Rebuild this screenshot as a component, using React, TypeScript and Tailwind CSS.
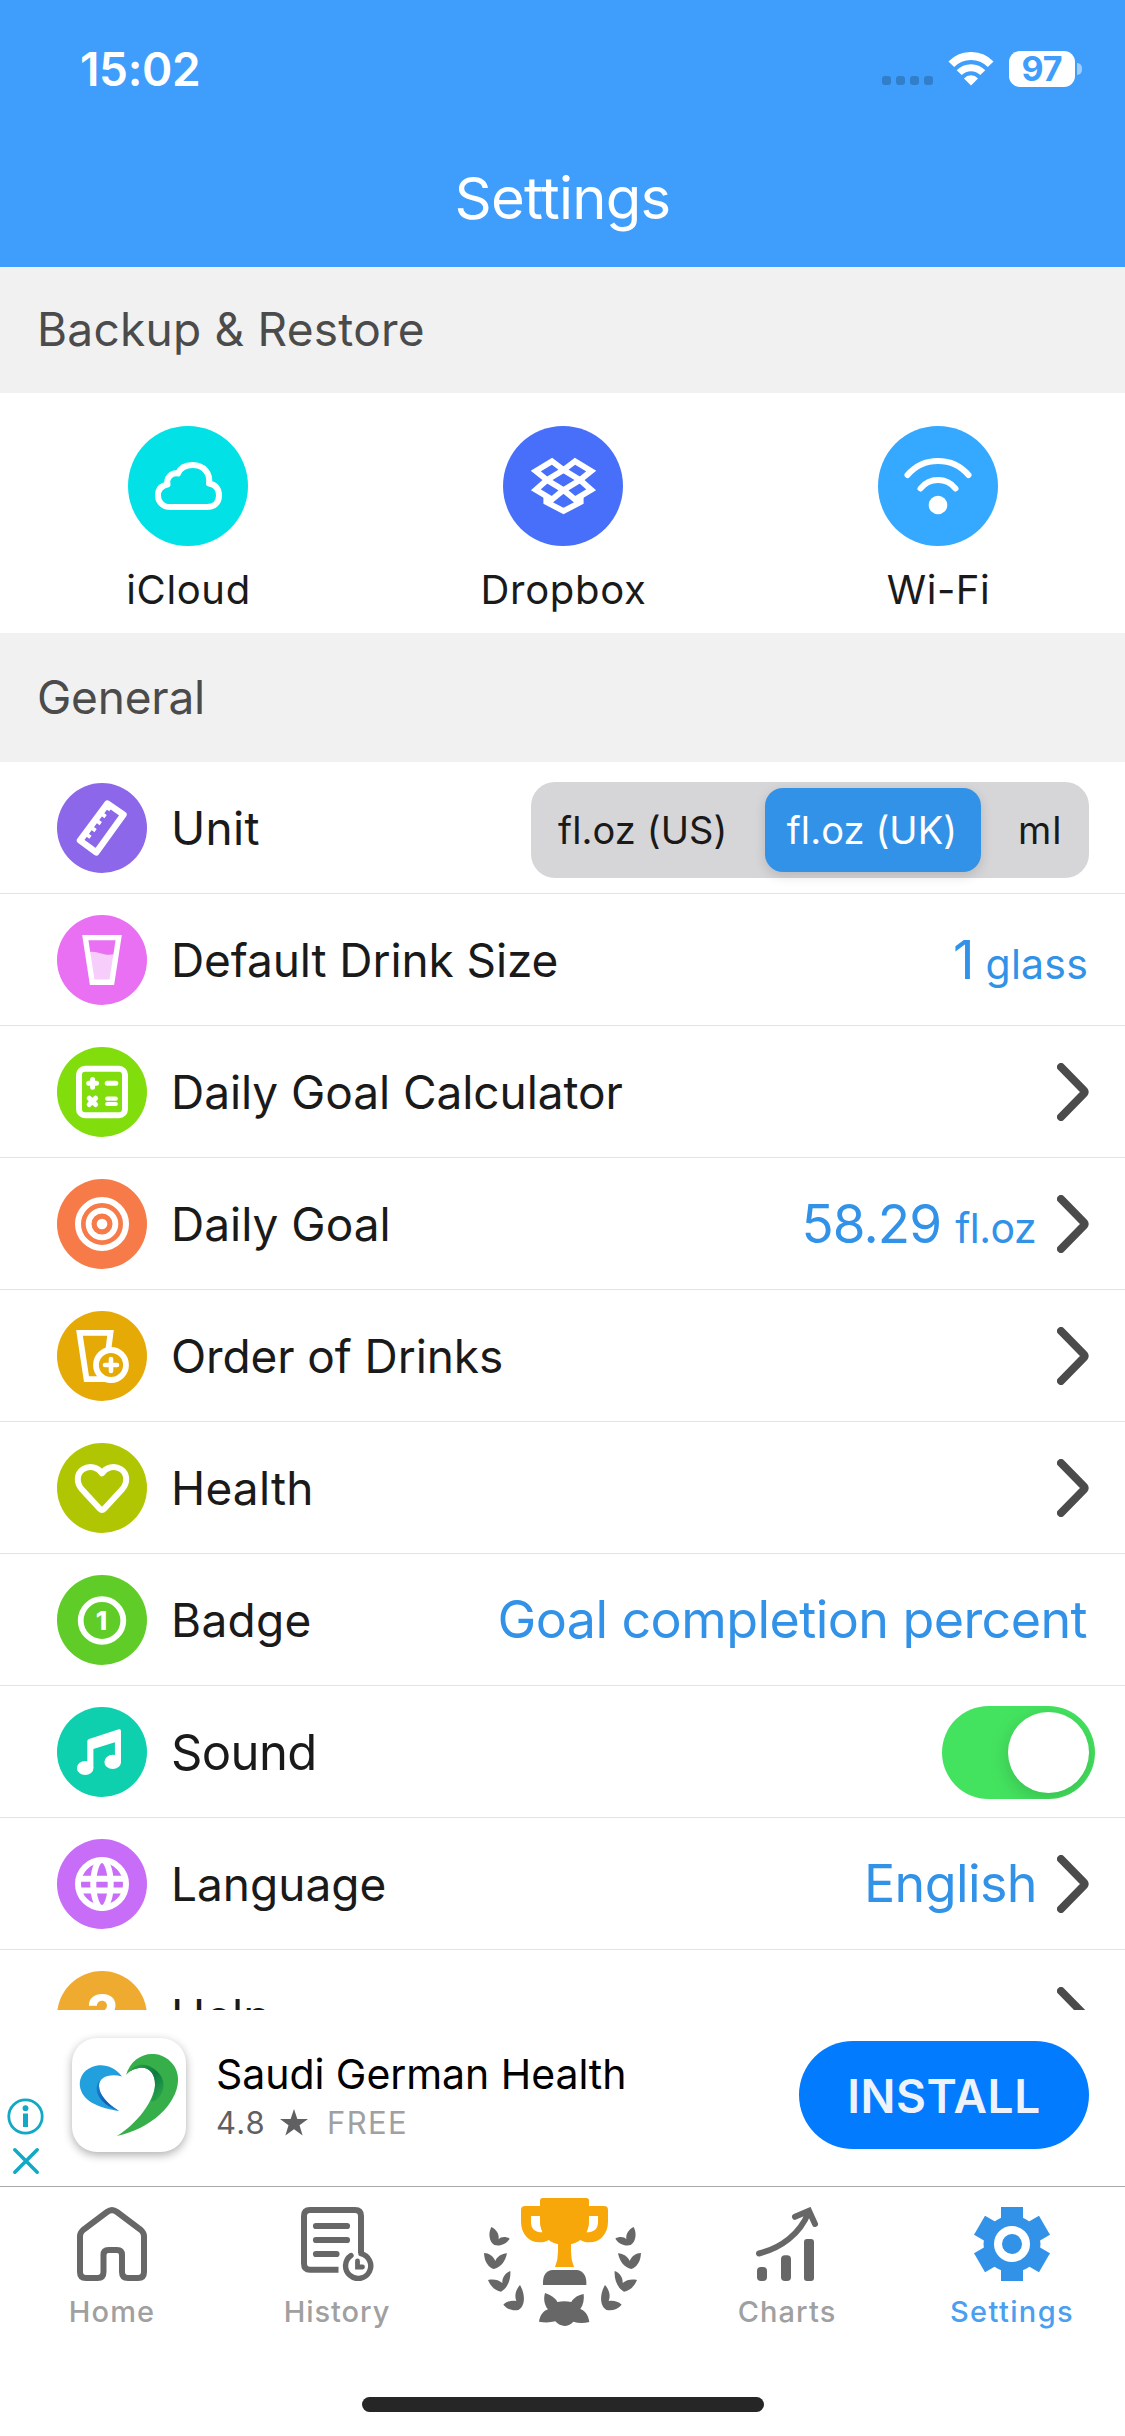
import type { ReactNode } from "react";

/* ---------- status bar ---------- */

function StatusWifi() {
  return (
    <svg className="ml-[15px] h-[34px] w-[46px]" viewBox="0 0 46 34" fill="none" stroke="#fff">
      <path d="M3.3 12.3A27.5 27.5 0 0 1 42.7 12.3" strokeWidth="8" />
      <path d="M11.2 20.6A16.5 16.5 0 0 1 34.8 20.6" strokeWidth="7" />
      <path d="M23 33.5L16 26.4A9.6 9.6 0 0 1 30 26.4Z" fill="#fff" stroke="none" />
    </svg>
  );
}

function StatusBar() {
  return (
    <div className="flex h-[138px] items-center pl-[80px] pr-[43px] text-white">
      <span className="text-[46px] font-semibold leading-none tracking-[-0.35px]">15:02</span>
      <div className="ml-auto flex items-center">
        <div className="mt-[23px] flex gap-[5px]">
          {[0, 1, 2, 3].map((i) => (
            <span key={i} className="h-[9px] w-[9px] rounded-[3px] bg-[#317fca]" />
          ))}
        </div>
        <StatusWifi />
        <div className="ml-[15px] flex h-[36px] w-[66px] items-center justify-center rounded-[11px] bg-white text-[34px] font-bold leading-none text-[#3f9dfb]">
          97
        </div>
        <span className="ml-[2px] h-[12px] w-[5px] rounded-r-full bg-[#9fcefd]" />
      </div>
    </div>
  );
}

/* ---------- backup services ---------- */

const cloudIcon = (
  <path
    d="M42 81C33.5 81 30 74.5 30 69.5C30 63 34 59.5 39.5 58.5C38 52 43 46.5 50 47.5C52.5 41.5 58 39 64.5 39C76 39 82.5 47.5 81 57.5C88 58.5 91 63.5 91 69.5C91 77 86 81 79 81Z"
    strokeWidth="6"
    strokeLinejoin="round"
  />
);

const dropboxIcon = (
  <g strokeWidth="5.8">
    <path d="M49 35.3L60.5 44L44 54L32.8 45Z" />
    <path d="M72 35.3L60.5 44L77 54L88.2 45Z" />
    <path d="M44 54L32.8 63.8L49 73.5L60.5 64Z" />
    <path d="M77 54L88.2 63.8L72 73.5L60.5 64Z" />
    <path d="M43.3 70V76L60.5 85L77.7 76V70" />
  </g>
);

const wifiIcon = (
  <g strokeWidth="6" strokeLinecap="round">
    <path d="M29.5 49A40.2 40.2 0 0 1 90.5 49" />
    <path d="M42.5 62.5A22.3 22.3 0 0 1 77.5 62.5" />
    <circle cx="60" cy="79" r="9.3" fill="#fff" stroke="none" />
  </g>
);

function Service({ label, bg, tracking, children }: { label: string; bg: string; tracking: string; children: ReactNode }) {
  return (
    <div className="flex flex-1 flex-col items-center pt-[33px]">
      <svg className={`h-[120px] w-[120px] rounded-full ${bg}`} viewBox="0 0 120 120" fill="none" stroke="#fff">
        {children}
      </svg>
      <span className={`mt-[20px] pl-[2px] text-[40px] leading-[48px] text-[#1a1a1a] ${tracking}`}>{label}</span>
    </div>
  );
}

/* ---------- settings rows ---------- */

const rulerIcon = (
  <g>
    <path d="M50.5 20.5L66.5 31.7L39.3 69.3L23 57.5Z" strokeWidth="6.4" strokeLinejoin="round" />
    <path d="M27.5 50L33.5 54.3M32.8 43.4L38.6 47.6M38 36.4L43.8 40.6M42.8 29.4L48.6 33.6M47.6 22.6L53.4 26.8" strokeWidth="3.8" />
  </g>
);

const glassIcon = (
  <g>
    <path d="M33 37C41 35.5 47 42 57.5 39L54.5 67H35.5Z" fill="#fff" fillOpacity="0.65" stroke="none" />
    <path d="M28.3 22.6H61.7L54.8 67.2H35.2Z" strokeWidth="5.4" />
  </g>
);

const calculatorIcon = (
  <g strokeLinecap="round">
    <rect x="22" y="21.8" width="46" height="46.4" rx="6" strokeWidth="6" />
    <path d="M35.6 32.400V40.200M31.700 36.3H39.500M50.2 36.3H58.8M32.2 51.2L38.6 57.6M38.6 51.2L32.2 57.6" strokeWidth="5" />
    <path d="M50.2 51.7H58.8M50.2 57H58.8" strokeWidth="4.200" />
  </g>
);

const targetIcon = (
  <g>
    <circle cx="45" cy="45" r="24" strokeWidth="6" />
    <circle cx="45" cy="45" r="13.4" strokeWidth="5.8" />
    <circle cx="45" cy="45" r="5.3" fill="#fff" stroke="none" />
  </g>
);

const orderIcon = (
  <g strokeWidth="5.8">
    <path d="M51.3 39L53.5 21.9H22.5L29.5 68.1H50" />
    <circle cx="54" cy="54" r="15" />
    <path d="M54 48V60M48 54H60" strokeWidth="4.6" strokeLinecap="round" />
  </g>
);

const heartIcon = (
  <path
    d="M43 66L25 46.5C19 40 19.5 30.5 26 26.2C32.8 21.9 41 24.3 45 30.3C49 24.3 57.2 21.9 64 26.2C70.5 30.5 71 40 65 46.5L47 66Q45 68 43 66Z"
    strokeWidth="6"
    strokeLinejoin="round"
  />
);

const badgeIcon = (
  <g>
    <circle cx="45" cy="45.5" r="21.3" strokeWidth="5.8" />
    <text x="44.4" y="55.2" textAnchor="middle" fontSize="26" fontWeight="800" fill="#fff" stroke="none">
      1
    </text>
  </g>
);

const musicIcon = (
  <g fill="#fff" stroke="none">
    <path d="M30.3 34Q30.5 32.4 32 31.9L61.8 22.3Q64 21.8 64 24V56H57.9V35.2L36.4 42V61H30.3Z" />
    <ellipse cx="28.2" cy="61" rx="8.3" ry="7.1" />
    <ellipse cx="55.7" cy="54.9" rx="8.3" ry="7.1" />
  </g>
);

const globeIcon = (
  <g strokeWidth="6">
    <circle cx="45" cy="45" r="24" />
    <ellipse cx="45" cy="45" rx="8.7" ry="24" />
    <path d="M22 39.8H68M22 51.4H68" />
  </g>
);

const helpIcon = (
  <text x="45.5" y="65" textAnchor="middle" fontSize="56" fontWeight="700" fill="#fff" stroke="none">
    ?
  </text>
);

function Chevron() {
  return (
    <svg className="h-[58px] w-[32px]" viewBox="0 0 32 58" fill="none" stroke="#4b4b4b" strokeWidth="8" strokeLinecap="round" strokeLinejoin="round">
      <path d="M4 4L27 27.5Q28.2 29 27 30.5L4 54" />
    </svg>
  );
}

function UnitPicker() {
  return (
    <div className="mt-[4px] flex h-[96px] w-[558px] items-center rounded-[24px] bg-[#d6d6d8] text-[38px] leading-none tracking-[0.1px] text-[#1a1a1a]">
      <span className="w-[234px] pl-[27px]">fl.oz (US)</span>
      <span className="flex h-[84px] w-[216px] items-center justify-center rounded-[18px] bg-[#3192e8] pr-[2px] text-white shadow-[0_4px_12px_rgba(0,0,0,0.14)]">
        fl.oz (UK)
      </span>
      <span className="flex-1 pl-[37px] tracking-[1px]">ml</span>
    </div>
  );
}

function Toggle() {
  return (
    <div className="-mr-[6px] mt-[2px] flex h-[93px] w-[153px] items-center justify-end overflow-hidden rounded-full bg-[#44e35f] pr-[6px]">
      <span className="h-[81px] w-[81px] rounded-full bg-white shadow-[0_6px_20px_rgba(0,0,0,0.17)]" />
    </div>
  );
}

type RowProps = { label: string; bg: string; icon: ReactNode; value?: ReactNode; chevron?: boolean; labelClass?: string };

function Row({ label, bg, icon, value, chevron, labelClass = "text-[46px]" }: RowProps) {
  return (
    <div className="flex h-[132px] shrink-0 items-center border-b border-[#e4e4e6] pl-[57px] pr-[36px]">
      <svg className={`h-[90px] w-[90px] shrink-0 rounded-full ${bg}`} viewBox="0 0 90 90" fill="none" stroke="#fff">
        {icon}
      </svg>
      <span className={`ml-[24px] leading-none text-[#1a1a1a] ${labelClass}`}>{label}</span>
      <div className="ml-auto flex items-center text-[#3192e8]">
        {value}
        {chevron && (
          <span className="ml-[20px]">
            <Chevron />
          </span>
        )}
      </div>
    </div>
  );
}

const rows: RowProps[] = [
  { label: "Unit", bg: "bg-[#8c67ea]", icon: rulerIcon, value: <UnitPicker />, labelClass: "text-[46px] tracking-[0.3px]" },
  {
    label: "Default Drink Size",
    bg: "bg-[#e970f2]",
    icon: glassIcon,
    labelClass: "text-[46px] tracking-[-0.1px]",
    value: (
      <div className="mt-[2px] flex items-baseline leading-none">
        <span className="text-[53px]">1</span>
        <span className="ml-[11px] mr-px text-[41px] tracking-[0.2px]">glass</span>
      </div>
    ),
  },
  { label: "Daily Goal Calculator", bg: "bg-[#82dd0c]", icon: calculatorIcon, chevron: true, labelClass: "text-[46px] tracking-[-0.06px]" },
  {
    label: "Daily Goal",
    bg: "bg-[#f67b49]",
    icon: targetIcon,
    chevron: true,
    value: (
      <div className="mt-px flex items-baseline leading-none">
        <span className="text-[53px] tracking-[-0.9px]">58.29</span>
        <span className="ml-[14px] mr-px text-[41px] tracking-[-0.55px]">fl.oz</span>
      </div>
    ),
  },
  { label: "Order of Drinks", bg: "bg-[#e6aa06]", icon: orderIcon, chevron: true, labelClass: "text-[46px] tracking-[-0.1px]" },
  { label: "Health", bg: "bg-[#b0c603]", icon: heartIcon, chevron: true, labelClass: "text-[46px] tracking-[0.2px]" },
  {
    label: "Badge",
    bg: "bg-[#60cc28]",
    icon: badgeIcon,
    value: <span className="mr-[2px] text-[52px] leading-none tracking-[-0.58px]">Goal completion percent</span>,
    labelClass: "text-[46px] tracking-[0.3px]",
  },
  { label: "Sound", bg: "bg-[#0ecfae]", icon: musicIcon, value: <Toggle />, labelClass: "mt-[2px] text-[49px] tracking-[-0.6px]" },
  {
    label: "Language",
    bg: "bg-[#c76df8]",
    icon: globeIcon,
    chevron: true,
    value: <span className="text-[52px] leading-none tracking-[-0.6px]">English</span>,
  },
  { label: "Help", bg: "bg-[#efab30]", icon: helpIcon, chevron: true },
];

/* ---------- ad banner ---------- */

function AdLogo() {
  return (
    <svg className="ml-[28px] mt-[28px] h-[114px] w-[114px] rounded-[25px] bg-white shadow-[0_3px_10px_rgba(0,0,0,0.32)]" viewBox="0 0 114 114">
      <defs>
        <linearGradient id="blueShade" x1="0" y1="0" x2="1" y2="1">
          <stop offset="0" stopColor="#1b86d3" />
          <stop offset="0.6" stopColor="#1559b4" />
          <stop offset="1" stopColor="#1a86d8" />
        </linearGradient>
        <linearGradient id="greenShade" x1="0" y1="0" x2="1" y2="1">
          <stop offset="0" stopColor="#2fa548" />
          <stop offset="0.5" stopColor="#0c7a42" />
          <stop offset="1" stopColor="#2fae49" />
        </linearGradient>
      </defs>
      <path d="M50 38.5C42 28 30 25 20 29C10 33 6 42 8.5 51C12 64 28 70 47 73C36 66 27 57 27 48C27 39 38 35 50 38.5Z" fill="#22a0dd" />
      <path d="M28 42C20 50 26 66 47 73C36 66 27 57 27 48Q27 45 28 42Z" fill="url(#blueShade)" />
      <path d="M54 37C58 23 70 15 82 16C96 17 107 29 106 43C105 66 79 91 44.7 98C65 86 82 63 83 47C83.5 35 76 28 67 30C61 31 58 33 54 37Z" fill="#36ae49" />
      <path d="M57 34C62 27 70 25 77 28C90 34 96 46 88 58C84 63 81 64 79 63C82 57 83 51 83 47C83.5 35 76 28 67 30C62 31 60 32 57 34Z" fill="url(#greenShade)" />
    </svg>
  );
}

function AdBanner() {
  return (
    <div className="flex h-[176px] shrink-0 bg-white">
      <div className="ml-[7px] mt-[88px] flex w-[37px] flex-col items-center">
        <svg className="h-[37px] w-[37px]" viewBox="0 0 37 37" fill="none" stroke="#12a9c6">
          <circle cx="18.5" cy="18.5" r="16.7" strokeWidth="2.8" />
          <circle cx="18.5" cy="10.2" r="2.9" fill="#12a9c6" stroke="none" />
          <path d="M18.5 15.5V29" strokeWidth="5" />
        </svg>
        <svg className="mt-[12px] h-[28px] w-[28px]" viewBox="0 0 30 30" stroke="#12a9c6" strokeWidth="3.8" strokeLinecap="round">
          <path d="M3 3L27 27M27 3L3 27" />
        </svg>
      </div>
      <AdLogo />
      <div className="ml-[30px] mt-[38px]">
        <div className="text-[41px] leading-[52px] tracking-[-0.05px] text-black">Saudi German Health</div>
        <div className="flex h-[44px] items-center text-[31px] leading-none">
          <span className="tracking-[1.2px] text-[#606062]">4.8</span>
          <svg className="ml-[14px] h-[27px] w-[28px]" viewBox="0 0 26 25" fill="#606062">
            <path d="M13 0L16.1 9.2H26L18.1 15L21 24.5L13 18.8L5 24.5L7.9 15L0 9.2H9.9Z" />
          </svg>
          <span className="ml-[19px] tracking-[1.4px] text-[#a0a0a2]">FREE</span>
        </div>
      </div>
      <div className="ml-auto mr-[36px] mt-[31px] flex h-[108px] w-[290px] items-center justify-center rounded-full bg-[#027bff] pt-px text-[46px] font-semibold leading-none tracking-[0.6px] text-[#eef3fb]">
        INSTALL
      </div>
    </div>
  );
}

/* ---------- tab bar ---------- */

const homeIcon = (
  <svg className="h-[74px] w-[70px]" viewBox="0 0 70 74" fill="none" stroke="#676767" strokeWidth="6">
    <path d="M3 29C3 26 4 25 6 23L30 5Q35 1.2 40 5L64 23C66 25 67 26 67 29V65Q67 71 61 71H51Q45 71 45 65V48Q45 43 40 43H31.5Q26.5 43 26.5 48V65Q26.5 71 20.5 71H9Q3 71 3 65Z" />
  </svg>
);

const historyIcon = (
  <svg className="h-[74px] w-[73px]" viewBox="0 0 73 74" fill="none" stroke="#676767">
    <path d="M60 46V9Q60 3 54 3H9Q3 3 3 9V56.5Q3 62.8 9 62.8H37.5" strokeWidth="6" />
    <path d="M15 19H46M15 33H46M15 47H35.5" strokeWidth="6.2" strokeLinecap="round" />
    <path d="M50 48.5A12.6 12.6 0 1 0 60 46.6" strokeWidth="5.4" strokeLinecap="round" />
    <path d="M56.5 54V60H61.5" strokeWidth="4.8" strokeLinecap="round" />
  </svg>
);

const chartsIcon = (
  <svg className="h-[74px] w-[64px]" viewBox="0 0 64 74" fill="none" stroke="#676767" strokeWidth="6" strokeLinecap="round">
    <path d="M4 46.5C26 41 45 27 53.5 5.5" />
    <path d="M40 9.8L54 3.8L60 17" />
    <g fill="#676767" stroke="none">
      <rect x="2" y="60" width="10" height="14" rx="4" />
      <rect x="26" y="48.3" width="10" height="25.7" rx="4" />
      <rect x="49" y="32" width="10" height="42" rx="3" />
    </g>
  </svg>
);

const gearIcon = (
  <svg className="h-[74px] w-[76px]" viewBox="0 0 76 74" fill="#3192e8">
    <circle cx="38" cy="37" r="28.5" />
    <rect x="27" y="0" width="22" height="74" />
    <rect x="27" y="-0.5" width="22" height="75" transform="rotate(60 38 37)" />
    <rect x="27" y="-0.5" width="22" height="75" transform="rotate(120 38 37)" />
    <circle cx="38" cy="37" r="14" fill="none" stroke="#fff" strokeWidth="8" />
  </svg>
);

function LaurelSide() {
  return (
    <>
      <path d="M124 141C114 160 117 185 133 195C150 199 168 193 179 176C168 169 152 170 146 178C148 162 140 149 124 141Z" />
      <path d="M102 219C103 245 115 262 131 267C152 263 166 245 171 220C155 221 141 230 136 243C130 228 117 219 102 219Z" />
      <path d="M114 300C122 320 137 333 153 335C172 325 183 300 181 273C165 279 156 293 157 309C145 299 130 297 114 300Z" />
      <path d="M160 374C172 388 188 393 205 390C222 382 230 350 210 315C196 330 193 348 199 363C186 361 171 363 160 374Z" />
    </>
  );
}

function TrophyTab() {
  return (
    <div className="flex w-[225px] justify-center pr-[2px] pt-[9px]">
      <svg className="h-[132px] w-[160px]" viewBox="96 48 480 396" fill="#676767">
        <LaurelSide />
        <g transform="translate(675 0) scale(-1 1)">
          <LaurelSide />
        </g>
        <path d="M279 315V307C279 285 290 270 308 270H380C396 270 409 285 409 307V315Z" />
        <path d="M285 339C300 345 316 352 322 366C336 363 350 363 364 366C372 352 386 345 401 342C403 358 400 375 391 387C405 392 415 405 418 426C402 430 385 430 370 425C362 434 352 438 344 438C334 438 324 433 316 424C300 428 283 428 267 425C270 405 281 392 294 388C283 375 280 357 285 339Z" />
        <g fill="#f8a70a">
          <path d="M270 62Q270 54 278 54H409Q417 54 417 62V120C417 160 397 184 363 193V215Q363 240 372 261H315Q324 240 324 215V193C290 184 270 160 270 120Z" />
          <path fillRule="evenodd" d="M280 78H225Q213 78 213 90V125C213 162 238 187 268 187C280 187 290 184 298 179L310 150ZM272 108H243V126C243 146 254 157 278 157Q270 140 270 120Z" />
          <path fillRule="evenodd" d="M407 78H462Q474 78 474 90V125C474 162 449 187 419 187C407 187 397 184 389 179L377 150ZM415 108H444V126C444 146 433 157 409 157Q417 140 417 120Z" />
        </g>
      </svg>
    </div>
  );
}

function Tab({ label, icon, className }: { label: string; icon: ReactNode; className: string }) {
  return (
    <div className="flex w-[225px] flex-col items-center pr-px pt-[20px]">
      {icon}
      <span className={`mt-[15px] text-[29px] font-medium leading-[32px] ${className}`}>{label}</span>
    </div>
  );
}

/* ---------- screen ---------- */

export default function App() {
  return (
    <div className="flex h-[2436px] w-[1125px] flex-col overflow-hidden bg-white font-['Inter',sans-serif]">
      <header className="h-[267px] shrink-0 bg-[#3f9dfb]">
        <StatusBar />
        <h1 className="flex h-[120px] items-center justify-center text-[58px] leading-none tracking-[-0.78px] text-white">Settings</h1>
      </header>

      <main className="flex h-[1743px] shrink-0 flex-col overflow-hidden">
        <h2 className="flex h-[126px] shrink-0 items-center bg-[#f1f1f1] pb-[3px] pl-[37px] text-[46px] leading-none tracking-[0.25px] text-[#4b4b4b]">
          Backup &amp; Restore
        </h2>
        <div className="flex h-[240px] shrink-0">
          <Service label="iCloud" bg="bg-[#02e1e6]" tracking="tracking-[0.65px]">{cloudIcon}</Service>
          <Service label="Dropbox" bg="bg-[#476ffa]" tracking="tracking-[0.7px]">{dropboxIcon}</Service>
          <Service label="Wi-Fi" bg="bg-[#34a9ff]" tracking="tracking-[0.5px]">{wifiIcon}</Service>
        </div>
        <h2 className="flex h-[129px] shrink-0 items-center bg-[#f1f1f1] pb-[2px] pl-[37px] text-[46px] leading-none tracking-[-0.2px] text-[#4b4b4b]">
          General
        </h2>
        {rows.map((row) => (
          <Row key={row.label} {...row} />
        ))}
      </main>

      <AdBanner />

      <nav className="flex h-[210px] shrink-0 border-t border-[#a9aaa8]">
        <Tab label="Home" icon={homeIcon} className="tracking-[1.2px] text-[#a0a0a0]" />
        <Tab label="History" icon={historyIcon} className="tracking-[0.95px] text-[#a0a0a0]" />
        <TrophyTab />
        <Tab label="Charts" icon={chartsIcon} className="tracking-[1.1px] text-[#a0a0a0]" />
        <Tab label="Settings" icon={gearIcon} className="tracking-[1.37px] text-[#4a9ff0]" />
      </nav>
      <div className="mx-auto mt-px h-[15px] w-[402px] shrink-0 rounded-full bg-[#262626]" />
    </div>
  );
}
